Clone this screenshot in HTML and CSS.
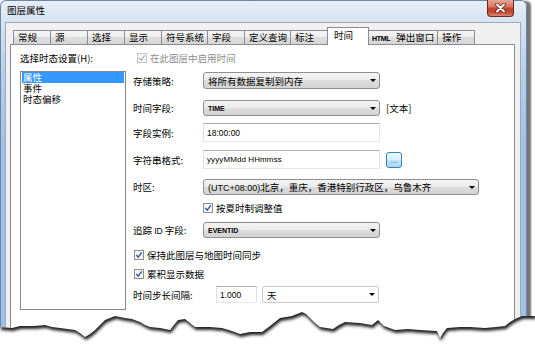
FILE: index.html
```html
<!DOCTYPE html>
<html lang="zh-CN">
<head>
    <meta charset="UTF-8">
    <title>图层属性</title>
    <link rel="stylesheet" href="styles.css">
</head>
<body>
    <div class="window">
        <div class="titlebar">
            <div class="title">图层属性</div>
            <div class="close">
                <svg width="13" height="10" viewBox="0 0 13 10">
                    <path d="M3 1.5 L10 8.5 M10 1.5 L3 8.5" stroke="#5b2419" stroke-width="3.6" stroke-linecap="round"/>
                    <path d="M3 1.5 L10 8.5 M10 1.5 L3 8.5" stroke="#fff" stroke-width="2" stroke-linecap="round"/>
                </svg>
            </div>
        </div>
        <div class="client">
            <div class="tabs">
                <div class="tab">常规</div>
                <div class="tab">源</div>
                <div class="tab">选择</div>
                <div class="tab">显示</div>
                <div class="tab">符号系统</div>
                <div class="tab">字段</div>
                <div class="tab">定义查询</div>
                <div class="tab">标注</div>
                <div class="tab active">时间</div>
                <div class="tab"><span class="latin-b">HTML</span>弹出窗口</div>
                <div class="tab">操作</div>
            </div>
            <div class="panel">
                <div class="side">
                    <div class="side-label">选择时态设置(H):</div>
                    <div class="listbox">
                        <div class="item selected">属性</div>
                        <div class="item">事件</div>
                        <div class="item">时态偏移</div>
                    </div>
                </div>
                <div class="form">
                    <div class="row check disabled enable">
                        <svg class="box" width="10" height="10" viewBox="0 0 10 10">
                            <rect x=".5" y=".5" width="9" height="9" fill="#f7f7f7" stroke="#c4c4c4"/>
                            <path d="M2.3 5 L4.2 7.2 L7.8 2.4" fill="none" stroke="#b3b3b3" stroke-width="1.4"/>
                        </svg>
                        在此图层中启用时间
                    </div>
                    <div class="row">
                        <div class="lbl">存储策略:</div>
                        <div class="combo">将所有数据复制到内存<span class="arrow"></span></div>
                    </div>
                    <div class="row loose short">
                        <div class="lbl">时间字段:</div>
                        <div class="combo"><span class="latin-b">TIME</span><span class="arrow"></span></div>
                        <div class="note">[文本]</div>
                    </div>
                    <div class="row tight tall">
                        <div class="lbl">字段实例:</div>
                        <div class="field"><span class="latin">18:00:00</span></div>
                    </div>
                    <div class="row tall">
                        <div class="lbl">字符串格式:</div>
                        <div class="field"><span class="latin-b">yyyyMMdd HHmmss</span></div>
                        <div class="dots">...</div>
                    </div>
                    <div class="row zone short">
                        <div class="lbl">时区:</div>
                        <div class="combo wide"><span><span class="latin">(UTC+08:00)</span>北京，重庆，香港特别行政区，乌鲁木齐</span><span class="arrow"></span></div>
                    </div>
                    <div class="row tight check indent">
                        <svg class="box" width="10" height="10" viewBox="0 0 10 10">
                            <rect x=".5" y=".5" width="9" height="9" fill="#f4f4f4" stroke="#8e8f8f"/>
                            <path d="M2.3 5 L4.2 7.2 L7.8 2.4" fill="none" stroke="#3d5596" stroke-width="1.4"/>
                        </svg>
                        按夏时制调整值
                    </div>
                    <div class="row short">
                        <div class="lbl">追踪 <span class="latin">ID</span> 字段:</div>
                        <div class="combo"><span class="latin-b">EVENTID</span><span class="arrow"></span></div>
                    </div>
                    <div class="row loose check">
                        <svg class="box" width="10" height="10" viewBox="0 0 10 10">
                            <rect x=".5" y=".5" width="9" height="9" fill="#f4f4f4" stroke="#8e8f8f"/>
                            <path d="M2.3 5 L4.2 7.2 L7.8 2.4" fill="none" stroke="#3d5596" stroke-width="1.4"/>
                        </svg>
                        保持此图层与地图时间同步
                    </div>
                    <div class="row tight check">
                        <svg class="box" width="10" height="10" viewBox="0 0 10 10">
                            <rect x=".5" y=".5" width="9" height="9" fill="#f4f4f4" stroke="#8e8f8f"/>
                            <path d="M2.3 5 L4.2 7.2 L7.8 2.4" fill="none" stroke="#3d5596" stroke-width="1.4"/>
                        </svg>
                        累积显示数据
                    </div>
                    <div class="row step">
                        <div class="lbl step-lbl">时间步长间隔:</div>
                        <div class="field small"><span class="latin">1.000</span></div>
                        <div class="combo plain">天<span class="arrow"></span></div>
                    </div>
                </div>
            </div>
        </div>
    </div>

    <svg class="torn" width="535" height="348" viewBox="0 0 535 348">
        <defs>
            <clipPath id="below">
                <path d="M0,327 L12,328 L20,326 L34,326 L45,325 L52,327 L60,328 L75,330 L80,333 L85,337 L90,334 L95,330 L100,325 L105,320 L110,318 L115,316 L125,318 L132,319 L140,322 L145,325 L150,327 L160,328 L170,330 L174,325 L178,320 L185,319 L190,323 L195,327 L210,327 L222,328 L232,331 L240,334 L245,333 L250,332 L262,332 L266,329 L270,326 L275,322 L280,318 L292,316 L297,314 L302,312 L306,314 L310,318 L315,323 L320,327 L333,329 L339,325 L345,322 L360,323 L372,325 L378,320 L384,326 L395,330 L408,329 L420,330 L437,331 L440,338 L443,333 L447,328 L460,327 L470,327 L485,328 L496,327 L505,326 L510,322 L515,319 L522,316 L535,316 L535,348 L0,348 Z"/>
            </clipPath>
            <filter id="soft" x="-5%" y="-10%" width="110%" height="130%">
                <feGaussianBlur stdDeviation="1.8"/>
            </filter>
        </defs>
        <path fill="#fff" d="M0,327 L12,328 L20,326 L34,326 L45,325 L52,327 L60,328 L75,330 L80,333 L85,337 L90,334 L95,330 L100,325 L105,320 L110,318 L115,316 L125,318 L132,319 L140,322 L145,325 L150,327 L160,328 L170,330 L174,325 L178,320 L185,319 L190,323 L195,327 L210,327 L222,328 L232,331 L240,334 L245,333 L250,332 L262,332 L266,329 L270,326 L275,322 L280,318 L292,316 L297,314 L302,312 L306,314 L310,318 L315,323 L320,327 L333,329 L339,325 L345,322 L360,323 L372,325 L378,320 L384,326 L395,330 L408,329 L420,330 L437,331 L440,338 L443,333 L447,328 L460,327 L470,327 L485,328 L496,327 L505,326 L510,322 L515,319 L522,316 L535,316 L535,348 L0,348 Z"/>
        <g clip-path="url(#below)">
            <path fill="#222" filter="url(#soft)" transform="translate(1,3)" d="M0,327 L12,328 L20,326 L34,326 L45,325 L52,327 L60,328 L75,330 L80,333 L85,337 L90,334 L95,330 L100,325 L105,320 L110,318 L115,316 L125,318 L132,319 L140,322 L145,325 L150,327 L160,328 L170,330 L174,325 L178,320 L185,319 L190,323 L195,327 L210,327 L222,328 L232,331 L240,334 L245,333 L250,332 L262,332 L266,329 L270,326 L275,322 L280,318 L292,316 L297,314 L302,312 L306,314 L310,318 L315,323 L320,327 L333,329 L339,325 L345,322 L360,323 L372,325 L378,320 L384,326 L395,330 L408,329 L420,330 L437,331 L440,338 L443,333 L447,328 L460,327 L470,327 L485,328 L496,327 L505,326 L510,322 L515,319 L522,316 L535,316 L535,0 L0,0 Z"/>
        </g>
    </svg>
</body>
</html>
```

FILE: styles.css
```css
body {
    margin: 0;
    width: 535px;
    height: 348px;
    overflow: hidden;
    position: relative;
    background: #fff;
    color: #000;
    font-family: "Noto Sans CJK SC", sans-serif;
    font-size: 9.5px;
}

.window {
    width: 527px;
    height: 348px;
    box-sizing: border-box;
    border: 1px solid #6f86a3;
    border-bottom: 0;
    border-radius: 6px 6px 0 0;
    padding: 0 5px 0 4px;
    background: linear-gradient(#e6eef7, #d7e3f1 21px, #b6d0ec 70px, #9fc3e8 140px);
    box-shadow: 5px 0 2px -1px rgba(70, 70, 70, 0.75);
}

.titlebar {
    height: 21px;
    display: flex;
    align-items: flex-start;
}
.title {
    margin: 3px 0 0 2px;
    line-height: 12px;
}
.close {
    margin: -1px 7px 0 auto;
    width: 27px;
    height: 17px;
    box-sizing: border-box;
    border: 1px solid #6b2a1f;
    border-top: 0;
    border-radius: 0 0 4px 4px;
    background: linear-gradient(#e9a795, #d57a64 40%, #c2412a 55%, #c94f37 80%, #d98b78);
    display: flex;
    align-items: center;
    justify-content: center;
}

.client {
    box-sizing: border-box;
    height: 326px;
    border: 1px solid #9aa9bb;
    border-bottom: 0;
    background: #f0f0f0;
    padding: 4px 5px 0 4px;
}

.tabs {
    display: flex;
    align-items: flex-end;
    height: 17px;
    padding-left: 3px;
}
.tab {
    box-sizing: border-box;
    min-width: 38px;
    height: 14px;
    padding: 0 3px 0 4px;
    margin-right: -1px;
    border: 1px solid #898c95;
    border-bottom: 0;
    background: linear-gradient(#f6f6f6, #ececec 50%, #dedede 50%, #d6d6d6);
    line-height: 13px;
    white-space: nowrap;
}
.tab.active {
    position: relative;
    min-width: 42px;
    height: 18px;
    margin-bottom: -1px;
    padding: 0 6px;
    background: #fff;
    line-height: 14px;
}
.tab .latin-b {
    margin: 0 6px 0 -1px;
    font-size: 7px;
    letter-spacing: -0.3px;
}

.panel {
    box-sizing: border-box;
    height: 304px;
    border: 1px solid #898c95;
    border-bottom: 0;
    background: #fff;
    display: flex;
}

.side {
    width: 106px;
    margin-left: 9px;
    padding-top: 7px;
}
.side-label {
    line-height: 12px;
    margin-bottom: 7px;
}
.listbox {
    box-sizing: border-box;
    height: 239px;
    border: 1px solid #828790;
    padding: 0 1px;
}
.item {
    line-height: 11px;
    padding-left: 1px;
}
.item.selected {
    background: #3399ff;
    color: #fff;
}

.form {
    margin-left: 7px;
    padding-top: 7px;
    display: flex;
    flex-direction: column;
}
.row {
    display: flex;
    align-items: center;
    height: 17px;
    margin-top: 8px;
}
.row.short { height: 16px; }
.row.tall { height: 19px; }
.row.tight { margin-top: 7px; }
.row.loose { margin-top: 11px; }
.row.zone { margin-top: 10px; }
.row.step { margin-top: 6px; }
.row.check {
    height: 12px;
    gap: 3px;
    padding-left: 1px;
}
.form .row:first-child { margin-top: 0; }
.row.enable { padding-left: 4px; color: #8d8d8d; }
.row.indent { padding-left: 70px; }

.lbl {
    width: 70px;
    flex: none;
    white-space: nowrap;
}
.step-lbl { width: 83px; }

.combo {
    box-sizing: border-box;
    width: 177px;
    height: 100%;
    padding: 0 3px 0 4px;
    border: 1px solid #8e8f8f;
    border-radius: 3px;
    background: linear-gradient(#f4f4f4, #ebebeb 50%, #dddddd 50%, #d3d3d3);
    display: flex;
    align-items: center;
    justify-content: space-between;
    white-space: nowrap;
}
.combo.wide { width: 276px; }
.combo.plain {
    width: 117px;
    margin-left: 5px;
    background: #fff;
    border-color: #c5c8cf;
    border-radius: 2px;
}
.arrow {
    width: 0;
    height: 0;
    border-left: 3px solid transparent;
    border-right: 3px solid transparent;
    border-top: 3px solid #000;
}

.field {
    box-sizing: border-box;
    width: 177px;
    height: 100%;
    padding-left: 3px;
    border: 1px solid;
    border-color: #abadb3 #e2e3ea #e3e9ef #dbdfe6;
    background: #fff;
    display: flex;
    align-items: center;
}
.field.small { width: 41px; }

.note { margin-left: 6px; }

.dots {
    box-sizing: border-box;
    width: 16px;
    height: 16px;
    margin-left: 6px;
    border: 1px solid #3c7fb1;
    border-radius: 3px;
    background: linear-gradient(#eaf6fd, #d9f0fc 50%, #bee6fd 50%, #a7d9f5);
    font-family: "Liberation Sans", sans-serif;
    font-size: 8px;
    line-height: 16px;
    text-align: center;
    color: #333;
}

.latin {
    font-family: "Liberation Sans", sans-serif;
    font-size: 8.5px;
}
.latin-b {
    font-family: "Liberation Sans", sans-serif;
    font-weight: bold;
    font-size: 7px;
}
.field .latin-b { font-size: 8px; font-weight: normal; letter-spacing: 0.1px; }
.combo .latin { font-size: 9px; }

.torn {
    position: absolute;
    top: 0;
    left: 0;
    pointer-events: none;
}
```
